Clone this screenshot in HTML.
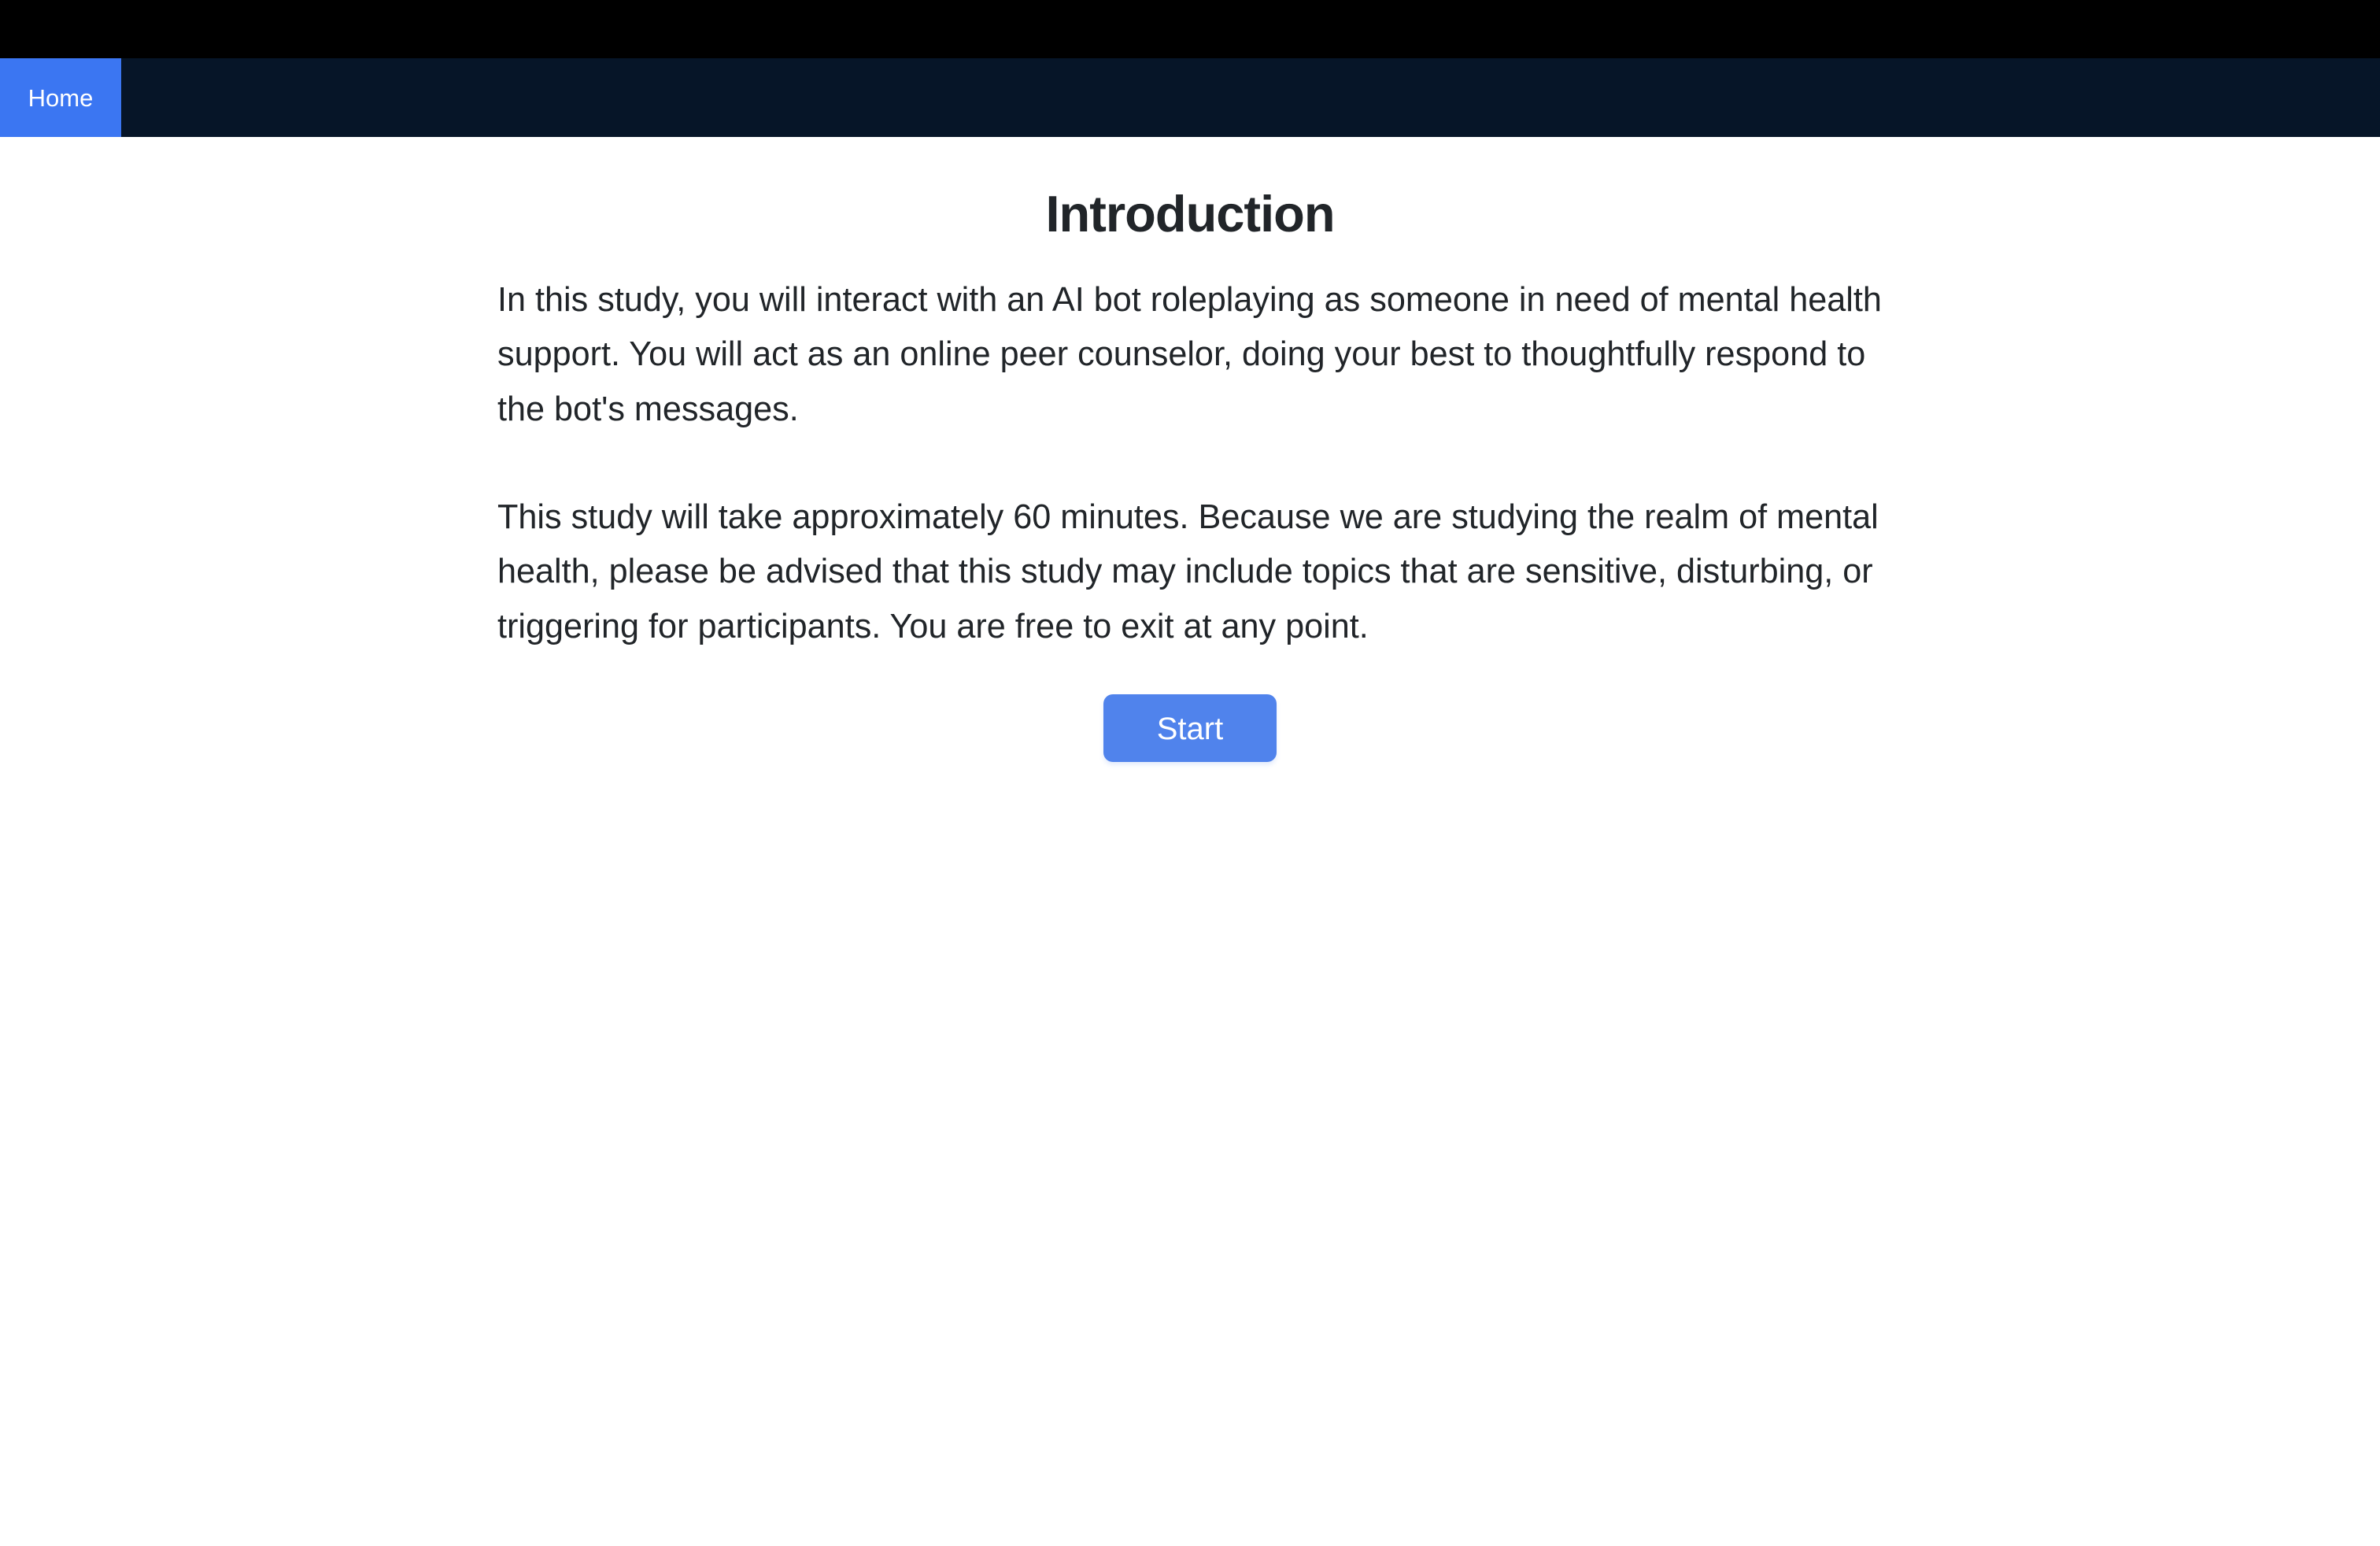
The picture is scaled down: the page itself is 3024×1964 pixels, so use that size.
<!DOCTYPE html>
<html><head><meta charset="utf-8"><style>
html,body{margin:0;padding:0;background:#fff;}
body{width:1512px;height:982px;zoom:2;position:relative;overflow:hidden;font-family:"Liberation Sans",Arial,sans-serif;color:#212529;}
.top{position:absolute;left:0;top:0;width:1512px;height:37px;background:#000;}
.nav{position:absolute;left:0;top:37px;width:1512px;height:50px;background:#061528;}
.home{position:absolute;left:0;top:0;width:77px;height:50px;background:#3b76f2;color:#fff;font-size:15.5px;line-height:51px;text-align:center;}
h1{position:absolute;left:0;width:1512px;top:117px;margin:0;text-align:center;font-size:32.5px;line-height:38px;font-weight:bold;letter-spacing:-0.5px;}
.p{position:absolute;left:316px;width:950px;font-size:21.6px;line-height:34.7px;white-space:nowrap;}
.btn{position:absolute;left:701px;top:441px;width:110px;height:43px;background:#5083ec;border-radius:6px;color:#fff;font-size:20px;line-height:44px;text-align:center;box-shadow:0 2px 3px rgba(80,131,236,0.15);}
</style></head><body>
<div class="top"></div>
<div class="nav"><div class="home">Home</div></div>
<h1>Introduction</h1>
<div class="p" style="top:173.4px">In this study, you will interact with an AI bot roleplaying as someone in need of mental health<br>support. You will act as an online peer counselor, doing your best to thoughtfully respond to<br>the bot's messages.</div>
<div class="p" style="top:311.5px">This study will take approximately 60 minutes. Because we are studying the realm of mental<br>health, please be advised that this study may include topics that are sensitive, disturbing, or<br>triggering for participants. You are free to exit at any point.</div>
<div class="btn">Start</div>
</body></html>
